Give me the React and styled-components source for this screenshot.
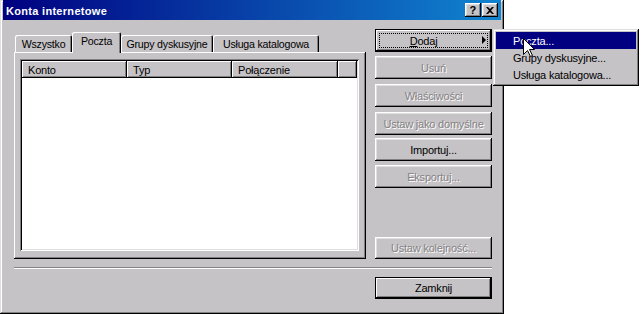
import React from "react";
import styled, { createGlobalStyle } from "styled-components";

const GRAY = "#c6c3c6";

const GlobalStyle = createGlobalStyle`
  html, body {
    margin: 0;
    padding: 0;
    background: #fff;
  }
  body {
    font-family: "Liberation Sans", Arial, sans-serif;
    font-size: 11px;
    letter-spacing: -0.2px;
    color: #000;
  }
`;

const Window = styled.div`
  position: relative;
  width: 504px;
  height: 314px;
  box-sizing: border-box;
  padding: 0 3px 3px;
  background: ${GRAY};
  display: flex;
  flex-direction: column;
  box-shadow: inset -1px -1px #000, inset 1px 1px #dfdfdf,
    inset -2px -2px #808080, inset 2px 2px #fff;
`;

const TitleBar = styled.div`
  height: 20px;
  flex: none;
  display: flex;
  align-items: center;
  padding: 0 3px 0 3px;
  background: linear-gradient(to right, #000080, #1084d0);
  color: #fff;
  font-weight: bold;
  font-size: 11px;
  letter-spacing: 0.3px;
`;

const TitleText = styled.span`
  flex: 1;
  padding-top: 1px;
`;

const CaptionButtons = styled.div`
  display: flex;
  gap: 1px;
`;

const CaptionButton = styled.div`
  width: 16px;
  height: 14px;
  box-sizing: border-box;
  background: ${GRAY};
  color: #000;
  display: flex;
  align-items: center;
  justify-content: center;
  font-weight: bold;
  font-size: 11px;
  box-shadow: inset -1px -1px #000, inset 1px 1px #fff,
    inset -2px -2px #808080, inset 2px 2px #dfdfdf;
`;

const Content = styled.div`
  flex: 1;
  display: flex;
  flex-direction: column;
  padding: 9px 9px 0 11px;
`;

const TopRow = styled.div`
  display: flex;
  gap: 9px;
  height: 230px;
`;

const LeftCol = styled.div`
  width: 352px;
  display: flex;
  flex-direction: column;
`;

const TabRow = styled.div`
  height: 23px;
  flex: none;
  display: flex;
  align-items: flex-end;
  padding-left: 1px;
`;

const Tab = styled.div`
  position: relative;
  z-index: ${(p) => (p.$active ? 2 : 1)};
  width: ${(p) => p.$w}px;
  height: ${(p) => (p.$active ? 21 : 17)}px;
  margin-bottom: ${(p) => (p.$active ? -1 : 0)}px;
  box-sizing: border-box;
  background: ${GRAY};
  border-radius: 2px 2px 0 0;
  display: flex;
  align-items: center;
  justify-content: center;
  white-space: nowrap;
  font-size: 10.6px;
  padding-bottom: ${(p) => (p.$active ? 3 : 0)}px;
  box-shadow: inset 1px 1px #fff, inset -1px 0 #000, inset -2px 0 #808080;
`;

const Panel = styled.div`
  height: 207px;
  box-sizing: border-box;
  padding: 7px 7px 8px 6px;
  display: flex;
  flex-direction: column;
  box-shadow: inset -1px -1px #000, inset 1px 1px #fff,
    inset -2px -2px #808080;
`;

const ListView = styled.div`
  flex: 1;
  background: #fff;
  padding: 2px;
  box-shadow: inset 1px 1px #808080, inset -1px -1px #fff,
    inset 2px 2px #000, inset -2px -2px #dfdfdf;
`;

const Header = styled.div`
  display: flex;
  height: 17px;
`;

const HeaderCell = styled.div`
  width: ${(p) => (p.$w ? `${p.$w}px` : "auto")};
  flex: ${(p) => (p.$w ? "none" : 1)};
  box-sizing: border-box;
  background: ${GRAY};
  padding-left: 6px;
  display: flex;
  align-items: center;
  box-shadow: inset -1px -1px #000, inset 1px 1px #fff,
    inset -2px -2px #808080;
`;

const RightCol = styled.div`
  width: 117px;
  display: flex;
  flex-direction: column;
  justify-content: space-between;
`;

const ButtonStack = styled.div`
  display: flex;
  flex-direction: column;
`;

const Button = styled.div`
  position: relative;
  height: ${(p) => p.$h || 23}px;
  width: 117px;
  margin-top: ${(p) => p.$mt || 0}px;
  box-sizing: border-box;
  background: ${GRAY};
  display: flex;
  align-items: center;
  justify-content: center;
  font-weight: normal;
  white-space: nowrap;
  padding-right: ${(p) => (p.$submenu ? 20 : 0)}px;
  color: ${(p) => (p.$disabled ? "#848284" : "#000")};
  text-shadow: ${(p) => (p.$disabled ? "1px 1px #fff" : "none")};
  box-shadow: ${(p) =>
    p.$framed
      ? "inset 0 0 0 1px #000, inset -2px -2px #000, inset 2px 2px #fff, inset -3px -3px #808080"
      : "inset -1px -1px #000, inset 1px 1px #fff, inset -2px -2px #808080, inset 2px 2px #dfdfdf"};

  &::before {
    content: "";
    display: ${(p) => (p.$focused ? "block" : "none")};
    position: absolute;
    inset: 4px;
    border: 1px dotted #000;
  }

  &::after {
    content: "";
    display: ${(p) => (p.$submenu ? "block" : "none")};
    position: absolute;
    right: 6px;
    top: 7px;
    border-left: 4px solid #000;
    border-top: 4px solid transparent;
    border-bottom: 4px solid transparent;
  }
`;

const Separator = styled.div`
  margin-top: 8px;
  width: 478px;
  border-top: 1px solid #848284;
  border-bottom: 1px solid #fff;
`;

const Footer = styled.div`
  margin-top: 8px;
  display: flex;
  justify-content: flex-end;
`;

const Menu = styled.div`
  position: absolute;
  left: 493px;
  top: 29px;
  width: 146px;
  box-sizing: border-box;
  padding: 3px;
  background: ${GRAY};
  box-shadow: inset -1px -1px #000, inset 1px 1px #dfdfdf,
    inset -2px -2px #808080, inset 2px 2px #fff;
`;

const MenuItem = styled.div`
  height: 17px;
  padding-left: 17px;
  display: flex;
  align-items: center;
  background: ${(p) => (p.$active ? "#000080" : "transparent")};
  color: ${(p) => (p.$active ? "#fff" : "#000")};
`;

const Cursor = styled.svg`
  position: absolute;
  left: 523px;
  top: 38px;
`;

const tabs = [
  { label: "Wszystko", w: 57 },
  { label: "Poczta", w: 49, active: true },
  { label: "Grupy dyskusyjne", w: 92 },
  { label: "Usługa katalogowa", w: 106 },
];

const columns = [
  { label: "Konto", w: 105 },
  { label: "Typ", w: 105 },
  { label: "Połączenie", w: 106 },
];

const App = () => {
  return (
    <>
      <GlobalStyle />
      <Window>
        <TitleBar>
          <TitleText>Konta internetowe</TitleText>
          <CaptionButtons>
            <CaptionButton>?</CaptionButton>
            <CaptionButton>
              <svg width="8" height="7" viewBox="0 0 8 7">
                <path d="M0 0h2l2 2 2-2h2L5 3.5 8 7H6L4 5 2 7H0l3-3.5z" fill="#000" />
              </svg>
            </CaptionButton>
          </CaptionButtons>
        </TitleBar>

        <Content>
          <TopRow>
            <LeftCol>
              <TabRow>
                {tabs.map((t) => (
                  <Tab key={t.label} $w={t.w} $active={t.active}>
                    {t.label}
                  </Tab>
                ))}
              </TabRow>
              <Panel>
                <ListView>
                  <Header>
                    {columns.map((c) => (
                      <HeaderCell key={c.label} $w={c.w}>
                        {c.label}
                      </HeaderCell>
                    ))}
                    <HeaderCell />
                  </Header>
                </ListView>
              </Panel>
            </LeftCol>

            <RightCol>
              <ButtonStack>
                <Button $framed $focused $submenu>
                  <span>
                    <u>D</u>odaj
                  </span>
                </Button>
                <Button $disabled $mt={4}>Usuń</Button>
                <Button $disabled $mt={5}>Właściwości</Button>
                <Button $disabled $mt={5}>Ustaw jako domyślne</Button>
                <Button $mt={3}>Importuj...</Button>
                <Button $disabled $mt={4}>Eksportuj...</Button>
              </ButtonStack>
              <Button $disabled $h={22}>Ustaw kolejność...</Button>
            </RightCol>
          </TopRow>

          <Separator />

          <Footer>
            <Button $framed $h={22}>Zamknij</Button>
          </Footer>
        </Content>

        <Menu>
          <MenuItem $active>Poczta...</MenuItem>
          <MenuItem>Grupy dyskusyjne...</MenuItem>
          <MenuItem>Usługa katalogowa...</MenuItem>
        </Menu>

        <Cursor width="13" height="20" viewBox="0 0 13 20">
          <path
            d="M0.5 0.5 L0.5 16.5 L4.5 12.5 L7.5 18.5 L9.5 17.5 L6.5 11.5 L11.5 11.5 Z"
            fill="#fff"
            stroke="#000"
            strokeWidth="1"
          />
        </Cursor>
      </Window>
    </>
  );
};

export default App;
